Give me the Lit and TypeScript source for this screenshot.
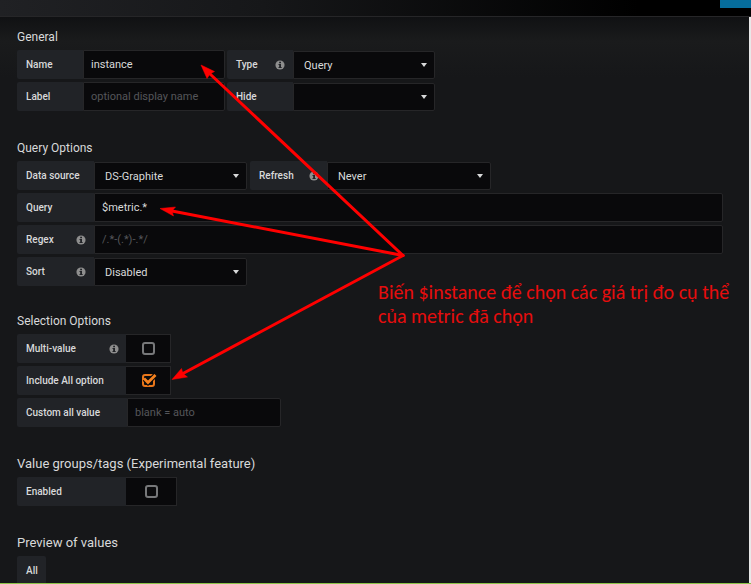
import { LitElement, html, css, svg, nothing } from "lit";
import { customElement } from "lit/decorators.js";

const infoIcon = html`<svg class="info" viewBox="0 0 12 12" aria-hidden="true">
  <circle cx="6" cy="6" r="5.5" fill="#8e8e8e" />
  <path d="M5 2.2h2.2v1.6H5zM4.2 4.8h3v3.5H8v1.3H4.2V8.3H5V6.1h-.8z" fill="#212327" />
</svg>`;

interface Arrow {
  line: [number, number];
  head: string;
}

const arrows: Arrow[] = [
  { line: [209, 73], head: "201,65 214.5,71.5 210,74 207,78.5" },
  { line: [172, 211], head: "160,208.5 175.5,207 172,211 173.5,216" },
  { line: [182, 374], head: "172,379.5 181.5,368.5 183,373.5 187.5,377" },
];

@customElement("app-root")
export class AppRoot extends LitElement {
  static styles = css`
    :host {
      display: flex;
      flex-direction: column;
      position: relative;
      height: 100vh;
      overflow: hidden;
      box-sizing: border-box;
      background: #161719;
      color: #d8d9da;
      font-family: Roboto, "Liberation Sans", sans-serif;
      font-size: 11px;
    }
    *, *::before { box-sizing: border-box; }
    .topbar {
      flex: none;
      display: flex;
      justify-content: flex-end;
      height: 17px;
      background: linear-gradient(90deg, #202124 0%, #161719 35%, #000 85%);
      border-bottom: 1px solid #262628;
    }
    .action {
      width: 31px;
      height: 8px;
      padding: 0;
      border: 0;
      background: #066d9c;
    }
    .page {
      flex: 1;
      min-height: 0;
      overflow: hidden;
      padding: 10px 26px 0 17px;
      border-right: 2px solid #e8e8e8;
      background: linear-gradient(180deg, #101113 0, #1a1b1c 24px, #161719 60px);
    }
    .footline { flex: none; height: 1px; background: #8bc34a; }
    .section { margin-bottom: 27px; }
    .section.short { margin-bottom: 25px; }
    h2 {
      margin: 0 0 3px;
      font-size: 12px;
      line-height: 20px;
      font-weight: 400;
    }
    h2.large { font-size: 13px; }
    .rows { display: flex; flex-direction: column; gap: 3px; }
    .row { display: flex; gap: 3px; }
    .row.tight { gap: 2px; }
    .field { display: flex; align-items: flex-end; }
    .field.wide { flex: 1; }
    .label {
      flex: none;
      display: flex;
      align-items: center;
      justify-content: space-between;
      height: 29px;
      padding: 0 8px 0 9px;
      background: #212327;
      border-radius: 2px 0 0 2px;
      font-size: 10px;
      font-weight: 500;
      white-space: nowrap;
    }
    .w-s { width: 66px; }
    .w-m { width: 77px; }
    .w-l { width: 109px; padding-right: 7px; }
    .w-xl { width: 110px; }
    .tag { border-radius: 2px; }
    .info { width: 10px; height: 10px; }
    .text, select {
      height: 29px;
      margin: 0;
      border: 1px solid #262628;
      border-radius: 0 2px 2px 0;
      background: #09090b;
      color: #d8d9da;
      font: inherit;
      outline: none;
    }
    .text { width: 142px; padding: 0 7px; }
    .text.mid { width: 154px; }
    .wide .text { width: auto; flex: 1; min-width: 0; }
    .text::placeholder { color: #55565a; opacity: 1; }
    .pick { position: relative; display: flex; }
    .pick::after {
      content: "";
      position: absolute;
      right: 8px;
      top: 12px;
      border: 3px solid transparent;
      border-top: 4px solid #d8d9da;
      border-bottom: 0;
      pointer-events: none;
    }
    select { appearance: none; width: 142px; height: 28px; padding: 0 10px; }
    .mid select { width: 153px; }
    .long select { width: 164px; }
    .check {
      display: flex;
      align-items: center;
      justify-content: center;
      position: relative;
      width: 45px;
      height: 29px;
      background: #09090b;
      border: 1px solid #262628;
      border-left: 0;
    }
    .check.big { width: 51px; }
    .check input {
      appearance: none;
      width: 13px;
      height: 13px;
      margin: 0;
      border: 2px solid #77787a;
      border-radius: 3px;
      background: #0b0b0d;
    }
    .check input:checked { border-color: #e8761a; }
    .tick { position: absolute; left: 14px; top: 5px; width: 17px; height: 15px; pointer-events: none; }
    .arrows {
      position: absolute;
      left: 0;
      top: 0;
      width: 420px;
      height: 400px;
      pointer-events: none;
    }
    .note {
      position: absolute;
      left: 378px;
      top: 280px;
      margin: 0;
      color: #e60d0d;
      font-family: Carlito, "Noto Sans", sans-serif;
      font-size: 20px;
      line-height: 24px;
      white-space: nowrap;
    }
  `;

  private label(id: string, text: string, size: string, info = false) {
    return html`<label class="label ${size}" for=${id}>${text}${info ? infoIcon : nothing}</label>`;
  }

  private input(id: string, text: string, size: string, value: string, hint = "", cls = "", info = false) {
    return html`<div class="field ${cls}">
      ${this.label(id, text, size, info)}
      <input class="text ${cls}" id=${id} type="text" .value=${value} placeholder=${hint} />
    </div>`;
  }

  private select(id: string, text: string, size: string, value: string, cls = "", info = false) {
    return html`<div class="field">
      ${this.label(id, text, size, info)}
      <span class="pick ${cls}"><select id=${id}><option>${value}</option></select></span>
    </div>`;
  }

  private check(id: string, text: string, checked: boolean, cls = "", info = false) {
    return html`<div class="field">
      ${this.label(id, text, "w-l", info)}
      <span class="check ${cls}">
        <input id=${id} type="checkbox" .checked=${checked} />
        ${checked
          ? html`<svg class="tick" viewBox="0 0 17 15" aria-hidden="true">
              <path d="M4.5 7 8 10.5 15 3.5" fill="none" stroke="#09090b" stroke-width="5" />
              <path d="M4 6.5 8 10.5 15.5 3" fill="none" stroke="#f5821f" stroke-width="2.8" />
            </svg>`
          : nothing}
      </span>
    </div>`;
  }

  render() {
    return html`
      <header class="topbar"><button class="action" aria-label="Save"></button></header>
      <main class="page">
        <section class="section">
          <h2>General</h2>
          <div class="rows">
            <div class="row tight">
              ${this.input("name", "Name", "w-s", "instance")}
              ${this.select("type", "Type", "w-s", "Query", "", true)}
            </div>
            <div class="row tight">
              ${this.input("label", "Label", "w-s", "", "optional display name")}
              ${this.select("hide", "Hide", "w-s", "")}
            </div>
          </div>
        </section>
        <section class="section short">
          <h2>Query Options</h2>
          <div class="rows">
            <div class="row">
              ${this.select("source", "Data source", "w-m", "DS-Graphite", "mid")}
              ${this.select("refresh", "Refresh", "w-m", "Never", "long", true)}
            </div>
            <div class="row">${this.input("query", "Query", "w-m", "$metric.*", "", "wide")}</div>
            <div class="row">${this.input("regex", "Regex", "w-m", "", "/.*-(.*)-.*/", "wide", true)}</div>
            <div class="row">${this.select("sort", "Sort", "w-m", "Disabled", "mid", true)}</div>
          </div>
        </section>
        <section class="section">
          <h2>Selection Options</h2>
          <div class="rows">
            ${this.check("multi", "Multi-value", false, "", true)}
            ${this.check("all", "Include All option", true)}
            ${this.input("custom", "Custom all value", "w-xl", "", "blank = auto", "mid")}
          </div>
        </section>
        <section class="section">
          <h2 class="large">Value groups/tags (Experimental feature)</h2>
          <div class="rows">${this.check("enabled", "Enabled", false, "big")}</div>
        </section>
        <section class="section">
          <h2 class="large">Preview of values</h2>
          <div class="row"><span class="label tag">All</span></div>
        </section>
      </main>
      <div class="footline"></div>
      <svg class="arrows" viewBox="0 0 420 400" aria-hidden="true">
        ${arrows.map(
          (a) => svg`<line x1="403" y1="255.5" x2=${a.line[0]} y2=${a.line[1]} stroke="#f00" stroke-width="3" stroke-linecap="round" />
            <polygon points=${a.head} fill="#f00" stroke="#f00" stroke-width="0.5" />`
        )}
      </svg>
      <p class="note">Biến $instance để chọn các giá trị đo cụ thể<br />của metric đã chọn</p>
    `;
  }
}
